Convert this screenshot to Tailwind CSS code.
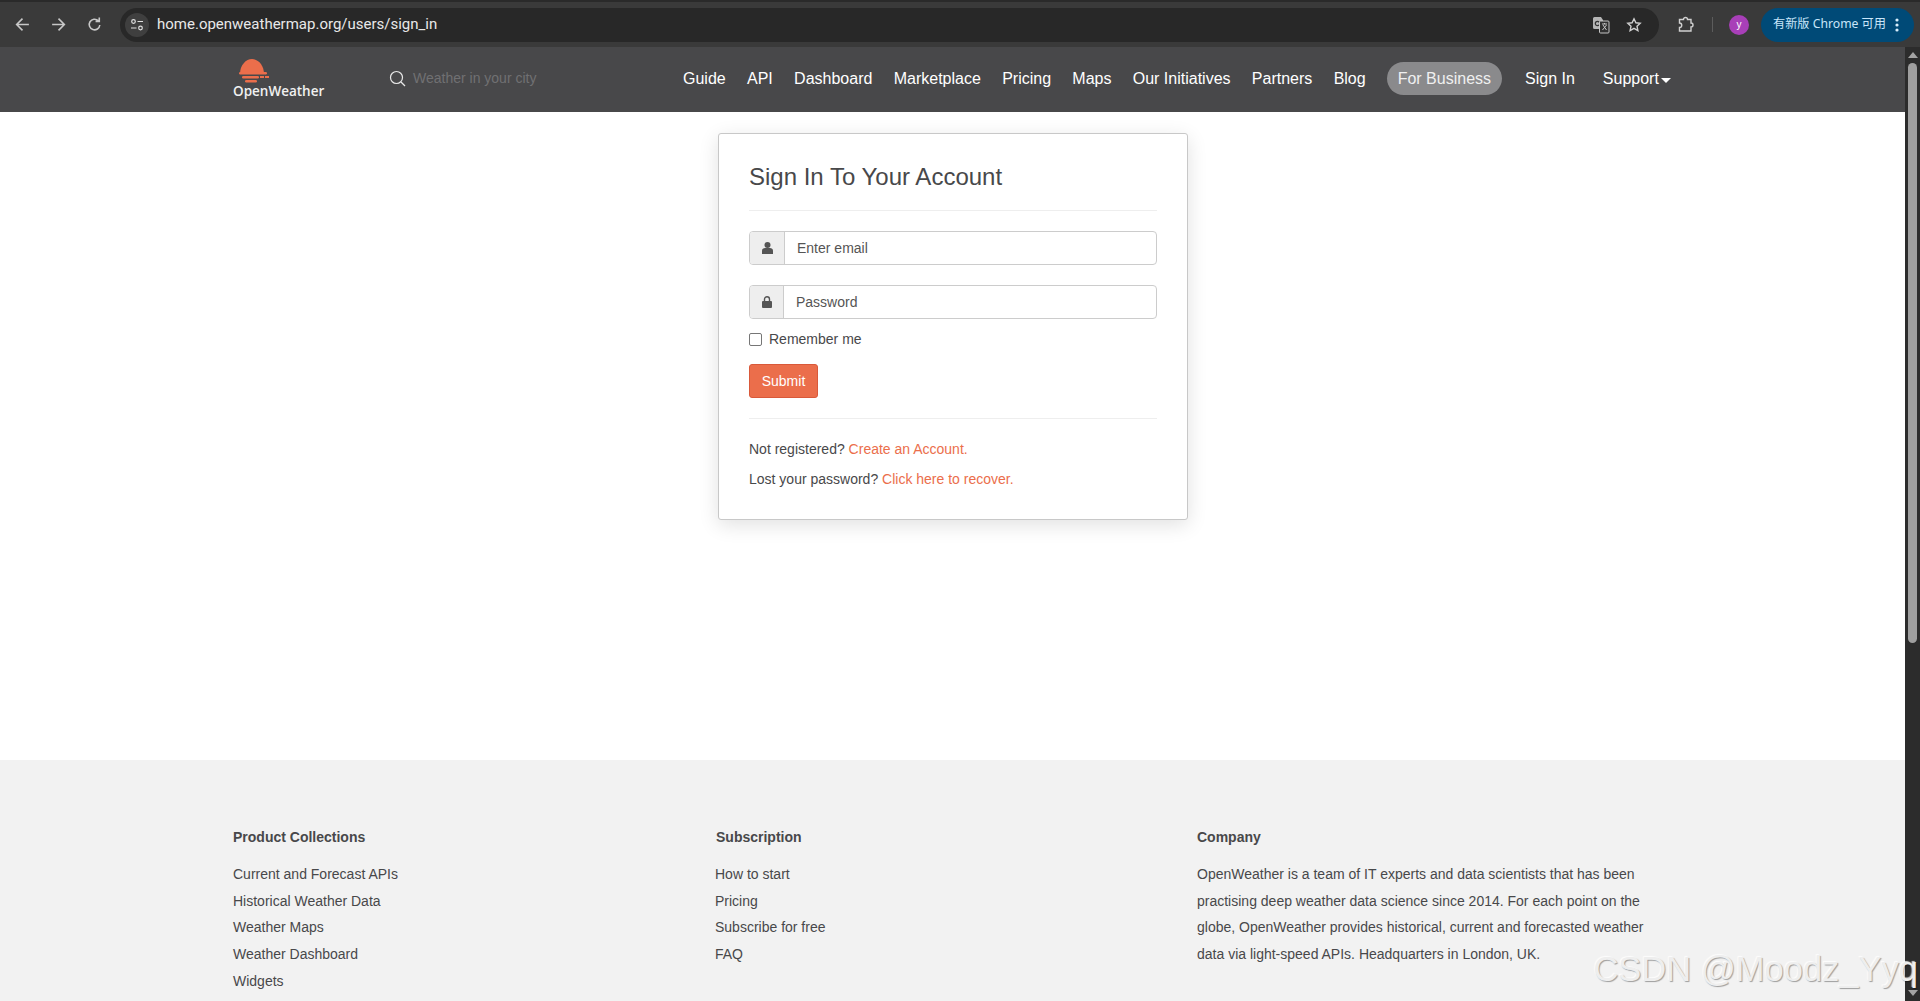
<!DOCTYPE html>
<html lang="en">
<head>
    <meta charset="UTF-8">
    <title>Sign In To Your Account</title>
    <script src="https://cdn.jsdelivr.net/npm/@tailwindcss/browser@4"></script>
</head>
<body class="h-[1001px] w-[1920px] overflow-hidden bg-white font-['Liberation_Sans',Arial,sans-serif] text-[14px] text-[#48484a]">
    <!-- Browser toolbar -->
    <header class="flex h-[47px] items-center bg-[#3a3a3a] border-t-2 border-[#2a2a2a]">
        <div class="flex w-[120px] shrink-0 items-center pl-[14px] gap-[19px] text-[#c7c7c7]">
            <svg class="h-[17px] w-[17px]" viewBox="0 0 16 16" fill="none" stroke="currentColor" stroke-width="1.5"><path d="M14 8H2.5M8 2.5 2.5 8 8 13.5"/></svg>
            <svg class="h-[17px] w-[17px]" viewBox="0 0 16 16" fill="none" stroke="currentColor" stroke-width="1.5"><path d="M2 8h11.5M8 2.5 13.5 8 8 13.5"/></svg>
            <svg class="h-[17px] w-[17px]" viewBox="0 0 16 16" fill="none" stroke="currentColor" stroke-width="1.5"><path d="M13 8.5A5 5 0 1 1 11.5 4.4M12.5 1.5v3.6H9"/></svg>
        </div>
        <div class="flex h-[34px] w-[1539px] shrink-0 items-center rounded-full bg-[#282828] pl-[5px] pr-[17px]">
            <span class="flex h-[24px] w-[24px] items-center justify-center rounded-full bg-[#3f3f3f]">
                <svg class="h-[14px] w-[14px]" viewBox="0 0 14 14" fill="none" stroke="#e0e0e0" stroke-width="1.2"><circle cx="3.5" cy="3.5" r="1.8"/><path d="M7.5 3.5H13M1 10h5.5"/><circle cx="10.5" cy="10" r="1.8"/></svg>
            </span>
            <span class="ml-[8px] font-['Roboto',sans-serif] text-[15px] text-[#e8e8e8]">home.openweathermap.org/users/sign_in</span>
            <span class="ml-auto flex items-center gap-[16px]">
                <svg class="h-[18px] w-[18px]" viewBox="0 0 18 18"><path d="M1 2.5A1.5 1.5 0 0 1 2.5 1H9l2 3v9H2.500A1.500 1.500 0 0 1 1 11.500z" fill="#b5b5b5"/><circle cx="5.500" cy="7.500" r="2.200" fill="none" stroke="#333333" stroke-width="1.200"/><rect x="7.500" y="5" width="9.500" height="12" rx="1" fill="#303030" stroke="#c4c4c4"/><path d="M10 8h5M12.500 7v1M10.500 14l4-5M11 9l3.500 5" stroke="#c4c4c4" stroke-width="1" fill="none"/></svg>
                <svg class="h-[16px] w-[16px]" viewBox="0 0 16 16" fill="none" stroke="#d0d0d0" stroke-width="1.4"><path d="m8 1.800 1.900 4 4.300.5-3.200 3 .9 4.300L8 11.400l-3.900 2.200.9-4.300-3.200-3 4.300-.5z"/></svg>
            </span>
        </div>
        <svg class="ml-[19px] h-[18px] w-[16px] shrink-0" viewBox="0 0 16 18" fill="none" stroke="#d0d0d0" stroke-width="1.4"><path d="M1.500 3.500H5.500a2 2 0 0 1 4 0H13v3.500a2 2 0 0 1 0 4v4H1.500v-3.500a2 2 0 0 0 0-4.500z"/></svg>
        <span class="ml-[18px] h-[15px] w-px shrink-0 bg-[#5c5c5c]"></span>
        <span class="ml-[16px] flex h-[20px] w-[20px] shrink-0 items-center justify-center rounded-full bg-[#a83fb8] text-[10px] text-white">y</span>
        <div class="ml-[12px] flex h-[34px] w-[153px] shrink-0 items-center rounded-full bg-[#004a77] pl-[12px] text-[12.200px] text-[#c8e6fa] font-['Noto_Sans','Noto_Sans_CJK_SC',sans-serif]">
            <span>有新版 Chrome 可用</span>
            <svg class="ml-[9px] h-[14px] w-[4px]" viewBox="0 0 4 14" fill="#d8eefc"><circle cx="2" cy="2" r="1.600"/><circle cx="2" cy="7" r="1.600"/><circle cx="2" cy="12" r="1.600"/></svg>
        </div>
    </header>

    <div class="relative flex h-[954px]">
        <div class="flex w-[1905px] flex-col">
            <!-- Site nav -->
            <nav class="flex h-[65px] shrink-0 items-center bg-[#48484a] pb-[2px] pl-[233px] text-[16px] text-white">
                <a class="flex w-[156px] shrink-0 flex-col items-start">
                    <svg class="ml-[6px] h-[24px] w-[31px]" viewBox="0 0 31 24" fill="#eb6e4b"><path d="M1 15C1 6 7 0 13 0s12 6 12 15z"/><rect y="13" width="28" height="2.500" rx="1.200"/><rect x="3" y="17" width="17" height="2.500" rx="1.200"/><rect x="21" y="17" width="4" height="2"/><rect x="26" y="17" width="4" height="2"/><rect x="6" y="21" width="12" height="2.500" rx="1.200"/></svg>
                    <span class="text-[13.500px] leading-[16px] font-semibold text-[#f0f0f0] font-['Open_Sans',sans-serif]">OpenWeather</span>
                </a>
                <svg class="h-[17px] w-[17px] shrink-0" viewBox="0 0 17 17" fill="none" stroke="#e8e8e8" stroke-width="1.200"><circle cx="7.500" cy="7.500" r="6"/><path d="m12 12 4 4"/></svg>
                <span class="ml-[7px] w-[270px] shrink-0 text-[14px] text-[#707072]">Weather in your city</span>
                <div class="flex items-center gap-[21.300px]">
                    <a>Guide</a><a>API</a><a>Dashboard</a><a>Marketplace</a><a>Pricing</a><a>Maps</a><a>Our Initiatives</a><a>Partners</a><a>Blog</a>
                </div>
                <a class="ml-[21px] flex h-[33px] items-center rounded-full bg-[#8a8a8c] px-[11px] text-[#f0f0f0]">For Business</a>
                <a class="ml-[23px]">Sign In</a>
                <a class="ml-[28px] flex items-center">Support<span class="mt-[3px] ml-[2px] h-0 w-0 border-x-[5px] border-t-[5px] border-x-transparent border-t-white"></span></a>
            </nav>

            <!-- Sign in card -->
            <main class="h-[648px] shrink-0 pl-[718px] pt-[21px]">
                <section class="h-[387px] w-[470px] rounded-[3px] border border-[#c8c8c8] bg-white px-[30px] pt-[30px] shadow-[0_5px_20px_rgba(0,0,0,0.12)]">
                    <h1 class="text-[24px] leading-[26px] text-[#48484a]">Sign In To Your Account</h1>
                    <hr class="mt-[20px] border-[#eeeeee]">
                    <div class="mt-[20px] flex h-[34px] rounded-[4px] border border-[#cccccc]">
                        <span class="flex w-[35px] items-center justify-center rounded-l-[3px] border-r border-[#cccccc] bg-[#eeeeee]">
                            <svg class="h-[12px] w-[11px]" viewBox="0 0 11 12" fill="#555555"><circle cx="5.500" cy="3" r="3"/><path d="M0 12V8.500C0 7 1.500 6 3 6h5c1.500 0 3 1 3 2.500V12z"/></svg>
                        </span>
                        <span class="flex items-center pl-[12px] text-[#555555]">Enter email</span>
                    </div>
                    <div class="mt-[20px] flex h-[34px] rounded-[4px] border border-[#cccccc]">
                        <span class="flex w-[34px] items-center justify-center rounded-l-[3px] border-r border-[#cccccc] bg-[#eeeeee]">
                            <svg class="h-[12px] w-[10px]" viewBox="0 0 10 12" fill="#555555"><path d="M2.500 5V3.200a2.500 2.500 0 0 1 5 0V5" fill="none" stroke="#555555" stroke-width="1.400"/><rect y="5" width="10" height="7" rx="1"/></svg>
                        </span>
                        <span class="flex items-center pl-[12px] text-[#555555]">Password</span>
                    </div>
                    <label class="mt-[14px] flex h-[13px] items-center">
                        <span class="h-[13px] w-[13px] rounded-[2px] border border-[#767676] bg-white"></span>
                        <span class="ml-[7px]">Remember me</span>
                    </label>
                    <button class="mt-[18px] block h-[34px] w-[69px] rounded-[3px] border border-[#d9593a] bg-[#eb6e4b] text-white">Submit</button>
                    <hr class="mt-[20px] border-[#eeeeee]">
                    <p class="mt-[20px] leading-[20px]">Not registered? <a class="text-[#eb6e4b]">Create an Account.</a></p>
                    <p class="mt-[10px] leading-[20px]">Lost your password? <a class="text-[#eb6e4b]">Click here to recover.</a></p>
                </section>
            </main>

            <!-- Footer -->
            <footer class="flex-1 bg-[#f2f2f2] pl-[233px] pt-[64px]">
                <div class="grid grid-cols-[482px_482px_450px] leading-[26.800px]">
                    <div>
                        <h4 class="mb-[10px] font-bold">Product Collections</h4>
                        <p>Current and Forecast APIs</p>
                        <p>Historical Weather Data</p>
                        <p>Weather Maps</p>
                        <p>Weather Dashboard</p>
                        <p>Widgets</p>
                    </div>
                    <div>
                        <h4 class="mb-[10px] ml-px font-bold">Subscription</h4>
                        <p>How to start</p>
                        <p>Pricing</p>
                        <p>Subscribe for free</p>
                        <p>FAQ</p>
                    </div>
                    <div>
                        <h4 class="mb-[10px] font-bold">Company</h4>
                        <p>OpenWeather is a team of IT experts and data scientists that has been practising deep weather data science since 2014. For each point on the globe, OpenWeather provides historical, current and forecasted weather data via light-speed APIs. Headquarters in London, UK.</p>
                    </div>
                </div>
            </footer>
        </div>

        <!-- Scrollbar -->
        <aside class="flex w-[15px] flex-col items-center bg-[#2c2c2c]">
            <span class="mt-[5px] h-0 w-0 border-x-[5px] border-b-[6px] border-x-transparent border-b-[#a3a3a3]"></span>
            <span class="mt-[5px] h-[580px] w-[9px] rounded-full bg-[#9f9f9f]"></span>
            <span class="mt-auto mb-[5px] h-0 w-0 border-x-[5px] border-t-[6px] border-x-transparent border-t-[#a3a3a3]"></span>
        </aside>

        <!-- Watermark over the page -->
        <span class="absolute right-[2px] bottom-[10px] text-[34.500px] leading-[44px] whitespace-nowrap text-[#eeeeee] [text-shadow:1px_1px_1px_rgba(0,0,0,0.35),-1px_-1px_1px_rgba(255,255,255,0.8)]">CSDN @Moodz_Yyq</span>
    </div>
</body>
</html>
